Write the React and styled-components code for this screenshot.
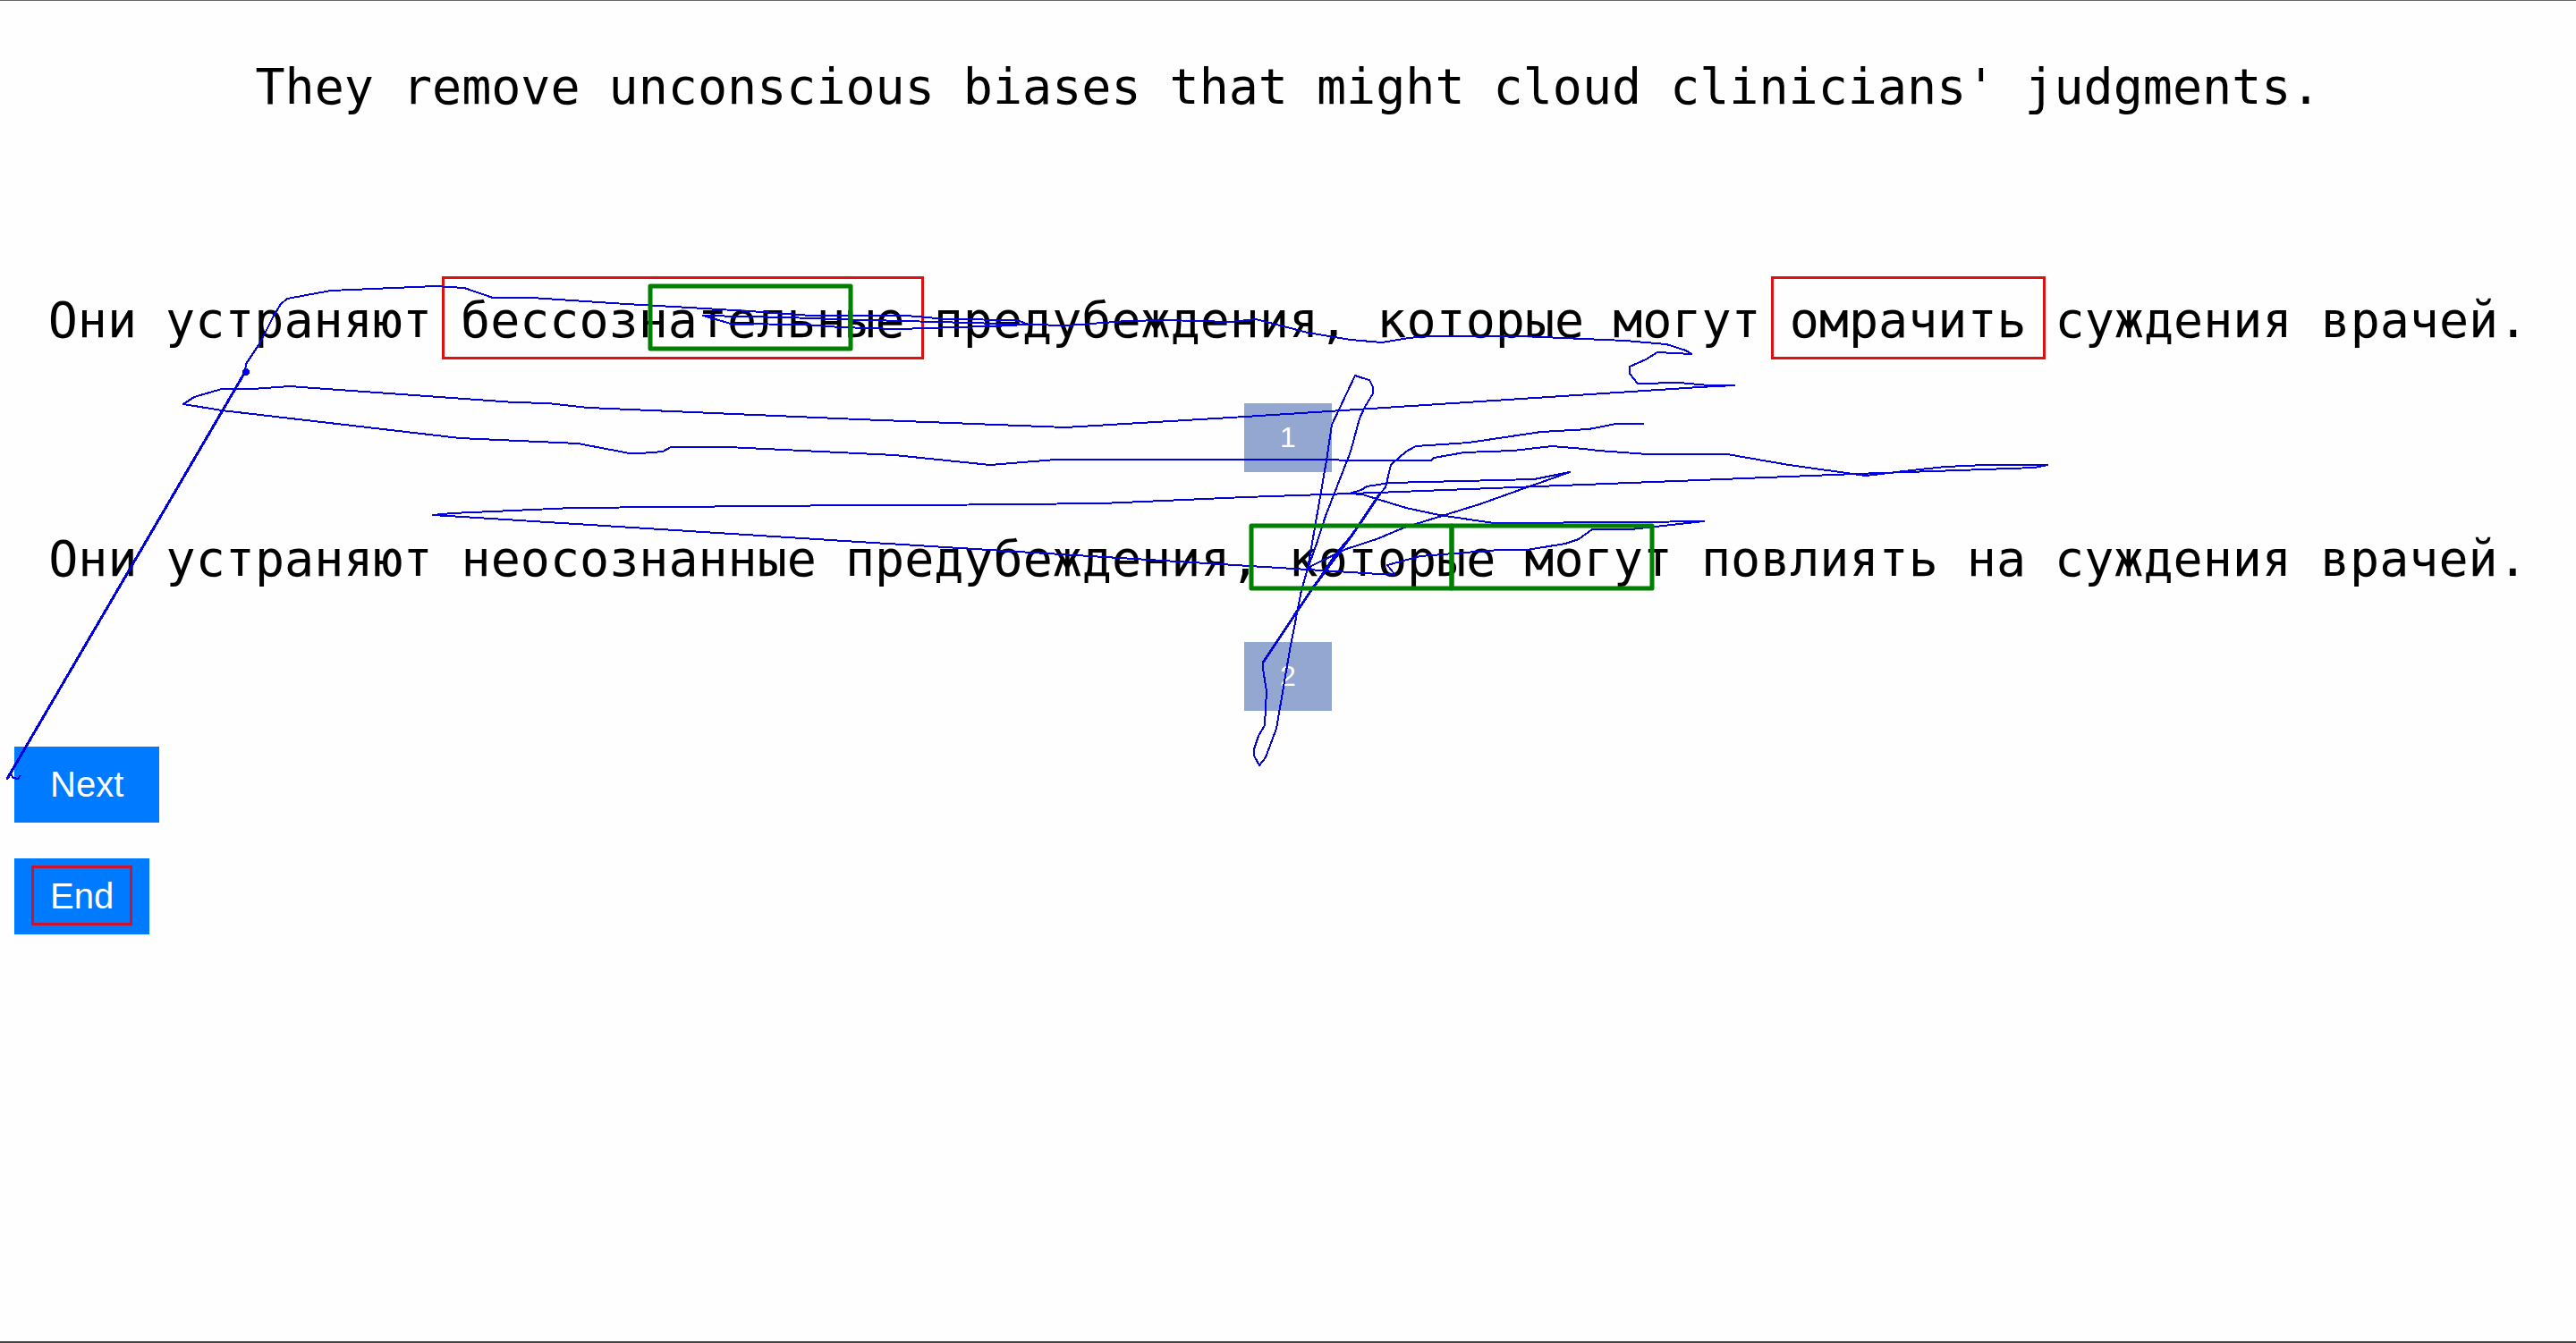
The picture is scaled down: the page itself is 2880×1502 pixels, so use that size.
import React from "react";
import styled, { createGlobalStyle } from "styled-components";

const GlobalStyle = createGlobalStyle`
  * { box-sizing: border-box; }
  body { margin: 0; background: #fefefe; }
`;

const Page = styled.main`
  position: relative;
  display: flex;
  flex-direction: column;
  min-height: 100vh;
  padding: 61px 16px 40px;
  border-top: 1px solid #666;
  border-bottom: 2px solid #444;
  overflow: hidden;
  color: #000;
  font-family: "Liberation Sans", Arial, sans-serif;
`;

const Line = styled.p`
  display: flex;
  flex-wrap: wrap;
  justify-content: center;
  column-gap: 32px;
  margin: 0;
  font: 400 55px/70px "DejaVu Sans Mono", Consolas, monospace;
`;

const Source = styled(Line)`
  margin-bottom: 191px;
`;

const Choices = styled.ol`
  display: flex;
  flex-direction: column;
  gap: 62px;
  margin: 0 0 40px;
  padding: 0;
  list-style: none;
`;

const Choice = styled.li`
  display: flex;
  flex-direction: column;
  align-items: center;
  gap: 58px;
`;

const Difference = styled.mark`
  margin: -14px -21px -9px;
  padding: 11px 18px 6px;
  border: 3px solid #e01010;
  background: none;
  color: inherit;
`;

const PickButton = styled.button`
  padding: 20px 40px;
  border: 0;
  background: #93a7d0;
  color: #fff;
  font: 32px/37px "Liberation Sans", Arial, sans-serif;
`;

const Actions = styled.div`
  display: flex;
  flex-direction: column;
  align-items: flex-start;
  gap: 40px;
`;

const ActionButton = styled.button`
  padding: ${(p) => (p.$framed ? "8px 19px 10px" : "20px 40px")};
  border: 0;
  background: #007bff;
  color: #fff;
  font: 40px/45px "Liberation Sans", Arial, sans-serif;
`;

const Frame = styled.span`
  display: block;
  padding: 9px 18px 7px;
  border: 3px solid #c8142e;
`;

const Overlay = styled.svg`
  position: absolute;
  top: -1px;
  left: 0;
  width: 100%;
  height: 100%;
  pointer-events: none;
`;

const TRACE = `
M23 867 L20 871 L15 870 L12 866 L8 871 L274 416 L275 407 L291 383 L306 353 L314 340 L321 334
L370 325 L487 320 L519 322 L551 333 L594 333 L700 340 L788 345 L853 349 L907 353 L1013 353
L1060 357 L1137 358 L1150 363 L1193 364
L1260 359 L1303 358 L1376 360 L1404 357 L1462 372 L1510 380 L1545 383 L1575 378 L1597 376
L1701 376 L1817 381 L1863 385 L1885 392 L1891 396 L1853 394 L1840 402 L1822 410 L1822 418
L1831 429 L1878 428 L1910 431 L1939 431 L1900 433 L1517 458 L1392 466 L1191 478 L960 469
L658 456 L612 451 L575 450 L337 433 L324 432 L282 435 L248 435 L217 444 L205 452 L248 459
L514 490 L646 496 L704 507 L716 507 L741 505 L750 500 L814 500 L1000 509 L1107 520 L1180 514
L1392 514 L1600 515 L1603 512 L1637 506 L1692 504 L1735 499 L1771 502 L1787 504 L1842 508
L1931 508 L2000 520 L2086 532 L2137 526 L2175 522 L2219 520 L2289 520 L2275 523 L2075 530
L1900 537 L1539 551 L1392 556 L1232 563 L1033 565 L960 565 L640 568 L551 572 L505 574 L484 576
L533 579 L960 606 L1462 637 L1542 642 L1559 642 L1551 632 L1588 622 L1676 615 L1707 615
L1750 608 L1765 603 L1780 592 L1823 592 L1905 583 L1829 584 L1670 585 L1609 576 L1572 568
L1523 553 L1508 552 L1522 548 L1528 544 L1554 540 L1715 536 L1755 528 L1654 564 L1570 590
L1539 603 L1505 614 L1466 633 L1462 636 L1472 608 L1482 577 L1510 505 L1520 468 L1526 455
L1535 440 L1535 433 L1531 425 L1524 423 L1515 420 L1489 475 L1483 515 L1474 567 L1462 636
L1455 660 L1442 727 L1427 815 L1415 847 L1408 856 L1402 845 L1402 838 L1407 823 L1414 811
L1416 773 L1412 748 L1412 741 L1450 683 L1466 660 L1493 620 L1514 595 L1543 552 L1549 545
L1555 520 L1572 505 L1583 499 L1642 495 L1723 483 L1776 480 L1807 474 L1838 474`;

const REREAD =
  "M1137 364 L1003 368 L940 366 L900 363 L817 362 L786 353 L880 355 L933 357 L1010 359 L1083 361 L1150 363";

const REPEATED = "M8 871 L274 416 M1412 741 L1466 660 L1514 595 L1543 552";

const FIXATIONS = [
  { x: 727, y: 320 },
  { x: 1399, y: 588 },
  { x: 1623, y: 588 },
];

const SOURCE =
  "They remove unconscious biases that might cloud clinicians' judgments.";

const choices = [
  {
    id: 1,
    text: "Они устраняют бессознательные предубеждения, которые могут омрачить суждения врачей.",
    differences: ["бессознательные", "омрачить"],
  },
  {
    id: 2,
    text: "Они устраняют неосознанные предубеждения, которые могут повлиять на суждения врачей.",
    differences: [],
  },
];

function Words({ text, differences = [] }) {
  return text.split(" ").map((word, i) =>
    differences.includes(word) ? (
      <Difference key={i}>{word}</Difference>
    ) : (
      <span key={i}>{word}</span>
    )
  );
}

function GazeOverlay() {
  return (
    <Overlay aria-hidden="true">
      <g
        fill="none"
        stroke="#0000e0"
        strokeWidth="2"
        strokeLinejoin="round"
        shapeRendering="crispEdges"
      >
        <path d={TRACE} />
        <path d={REREAD} />
        <path d={REPEATED} strokeWidth="3" />
        <circle cx="275" cy="416" r="3" fill="#0000e0" />
      </g>
      <g fill="none" stroke="#008000" strokeWidth="5" strokeLinejoin="round">
        {FIXATIONS.map((f) => (
          <rect key={f.x} x={f.x} y={f.y} width="224" height="70" />
        ))}
      </g>
    </Overlay>
  );
}

export default function App() {
  return (
    <>
      <GlobalStyle />
      <Page>
        <Source as="h1">
          <Words text={SOURCE} />
        </Source>
        <Choices>
          {choices.map((choice) => (
            <Choice key={choice.id}>
              <Line>
                <Words text={choice.text} differences={choice.differences} />
              </Line>
              <PickButton type="button">{choice.id}</PickButton>
            </Choice>
          ))}
        </Choices>
        <Actions>
          <ActionButton type="button">Next</ActionButton>
          <ActionButton type="button" $framed>
            <Frame>End</Frame>
          </ActionButton>
        </Actions>
        <GazeOverlay />
      </Page>
    </>
  );
}
